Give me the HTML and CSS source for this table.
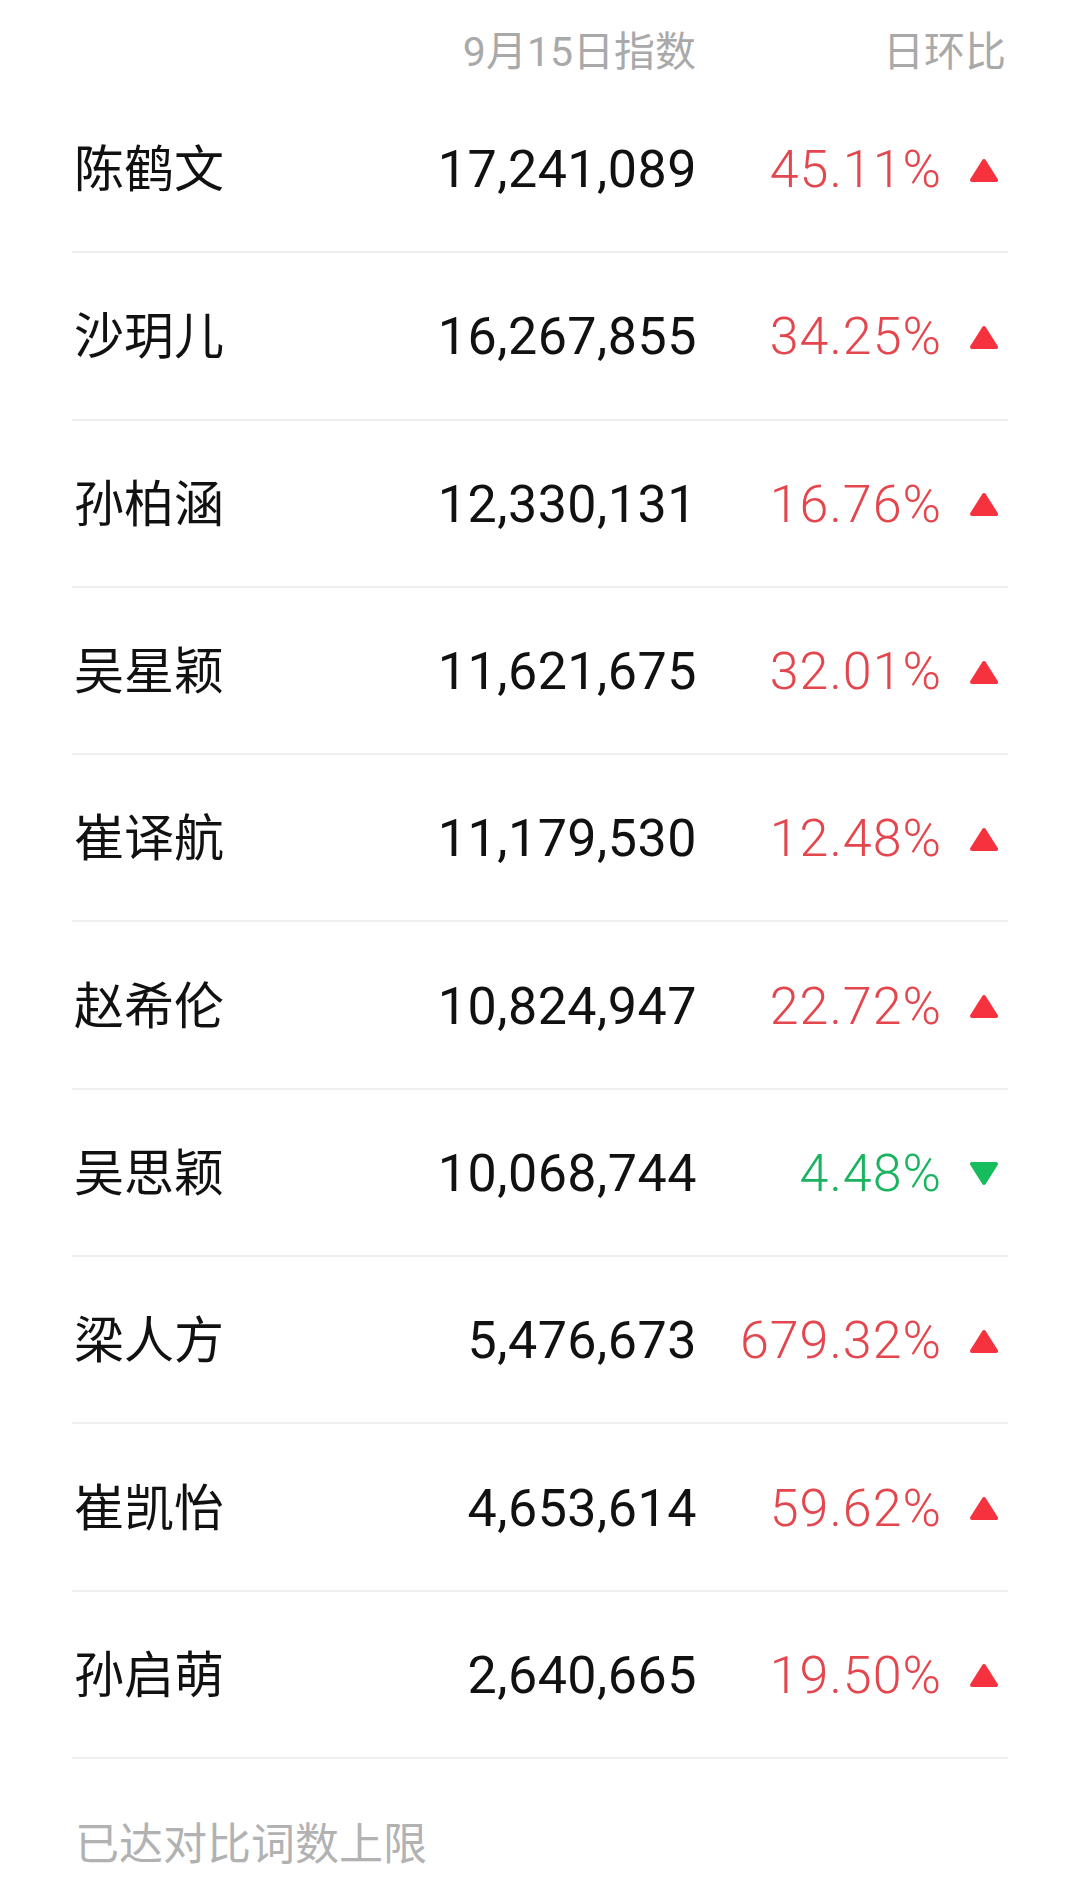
FILE: index.html
```html
<!DOCTYPE html>
<html lang="zh-CN">
<head>
<meta charset="utf-8">
<title>指数对比</title>
<link rel="stylesheet" href="styles.css">
</head>
<body>
<div class="page">
  <div class="head">
    <div class="spacer"></div>
    <div class="h-num">9月15日指数</div>
    <div class="h-pct">日环比</div>
  </div>

  <div class="row"><div class="name">陈鹤文</div><div class="num">17,241,089</div><div class="pct up">45.11%</div><svg class="arrow" viewBox="0 0 28 25"><polygon class="tri-up" points="14,3 26,22 2,22"/></svg></div>
  <div class="row"><div class="name">沙玥儿</div><div class="num">16,267,855</div><div class="pct up">34.25%</div><svg class="arrow" viewBox="0 0 28 25"><polygon class="tri-up" points="14,3 26,22 2,22"/></svg></div>
  <div class="row"><div class="name">孙柏涵</div><div class="num">12,330,131</div><div class="pct up">16.76%</div><svg class="arrow" viewBox="0 0 28 25"><polygon class="tri-up" points="14,3 26,22 2,22"/></svg></div>
  <div class="row"><div class="name">吴星颖</div><div class="num">11,621,675</div><div class="pct up">32.01%</div><svg class="arrow" viewBox="0 0 28 25"><polygon class="tri-up" points="14,3 26,22 2,22"/></svg></div>
  <div class="row"><div class="name">崔译航</div><div class="num">11,179,530</div><div class="pct up">12.48%</div><svg class="arrow" viewBox="0 0 28 25"><polygon class="tri-up" points="14,3 26,22 2,22"/></svg></div>
  <div class="row"><div class="name">赵希伦</div><div class="num">10,824,947</div><div class="pct up">22.72%</div><svg class="arrow" viewBox="0 0 28 25"><polygon class="tri-up" points="14,3 26,22 2,22"/></svg></div>
  <div class="row"><div class="name">吴思颖</div><div class="num">10,068,744</div><div class="pct down">4.48%</div><svg class="arrow" viewBox="0 0 28 25"><polygon class="tri-down" points="2,3 26,3 14,22"/></svg></div>
  <div class="row"><div class="name">梁人方</div><div class="num">5,476,673</div><div class="pct up">679.32%</div><svg class="arrow" viewBox="0 0 28 25"><polygon class="tri-up" points="14,3 26,22 2,22"/></svg></div>
  <div class="row"><div class="name">崔凯怡</div><div class="num">4,653,614</div><div class="pct up">59.62%</div><svg class="arrow" viewBox="0 0 28 25"><polygon class="tri-up" points="14,3 26,22 2,22"/></svg></div>
  <div class="row"><div class="name">孙启萌</div><div class="num">2,640,665</div><div class="pct up">19.50%</div><svg class="arrow" viewBox="0 0 28 25"><polygon class="tri-up" points="14,3 26,22 2,22"/></svg></div>

  <div class="foot">已达对比词数上限</div>
</div>
</body>
</html>
```
FILE: styles.css
```css
html, body {
  margin: 0;
  padding: 0;
  background: #ffffff;
}

body {
  font-family: Roboto, "Noto Sans CJK SC", "Noto Sans", sans-serif;
  color: #111111;
}

.page {
  padding: 0 72px;
}

.head {
  display: flex;
  align-items: flex-start;
  height: 86px;
  padding-top: 31px;
  box-sizing: border-box;
  font-size: 41px;
  line-height: 42px;
  color: #a9a9a9;
}

.head .spacer {
  flex: 1;
}

.h-num {
  width: 300px;
  text-align: right;
}

.h-pct {
  width: 312px;
  text-align: right;
  padding-right: 2px;
  box-sizing: border-box;
}

.row {
  display: flex;
  align-items: center;
  height: 167.3px;
  padding-top: 3px;
  box-sizing: border-box;
  border-bottom: 2px solid #efefef;
}

.name {
  flex: 1;
  font-size: 50px;
  line-height: 56px;
  color: #111111;
  padding-left: 2px;
}

.num {
  width: 300px;
  text-align: right;
  font-size: 52px;
  line-height: 56px;
  letter-spacing: 0.5px;
  color: #111111;
}

.pct {
  width: 245px;
  text-align: right;
  font-size: 52px;
  line-height: 56px;
  letter-spacing: 1px;
  font-weight: 300;
}

.pct.up {
  color: #e4464d;
}

.pct.down {
  color: #1ab461;
}

.arrow {
  width: 28px;
  height: 25px;
  margin-left: 28px;
  margin-right: 10px;
  flex: none;
}

.tri-up {
  fill: #f5323e;
  stroke: #f5323e;
  stroke-width: 4;
  stroke-linejoin: round;
}

.tri-down {
  fill: #17bd5d;
  stroke: #17bd5d;
  stroke-width: 4;
  stroke-linejoin: round;
}

.foot {
  margin-top: 64px;
  font-size: 44px;
  line-height: 44px;
  color: #b2b2b2;
  padding-left: 3px;
}
```
